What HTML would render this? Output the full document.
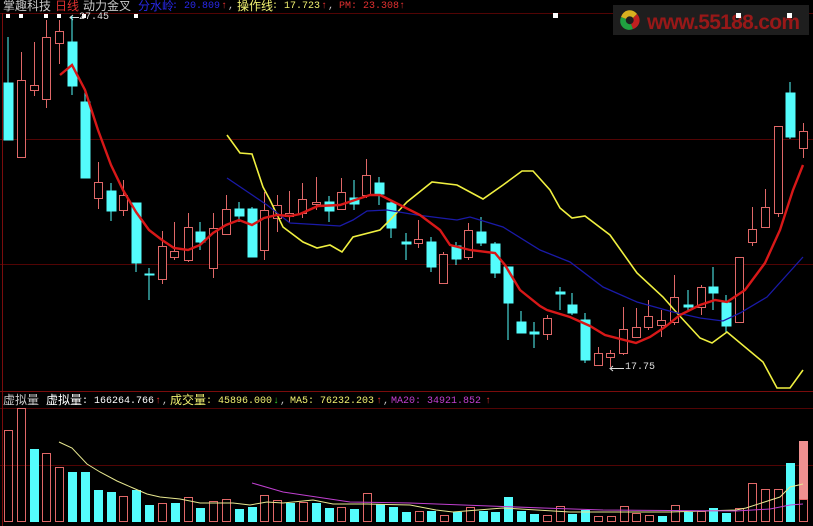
<!DOCTYPE html>
<html><head><meta charset="utf-8"><style>
html,body{margin:0;padding:0;background:#000;width:813px;height:526px;overflow:hidden;position:relative}
.t{position:absolute;white-space:pre;font-family:"Liberation Mono","Noto Sans CJK SC",monospace;font-size:10px;line-height:12px}
.c{font-family:"Liberation Sans","Noto Sans CJK SC",sans-serif;font-size:12px}
svg{position:absolute;left:0;top:0}
</style></head><body>
<svg width="813" height="526" viewBox="0 0 813 526">
<g stroke="#520404" stroke-width="1">
<line x1="0" y1="13.5" x2="813" y2="13.5"/>
<line x1="0" y1="139.5" x2="813" y2="139.5"/>
<line x1="0" y1="264.5" x2="813" y2="264.5"/>
<line x1="0" y1="391.5" x2="813" y2="391.5" stroke="#7a0c0c"/>
<line x1="0" y1="408.5" x2="813" y2="408.5"/>
<line x1="0" y1="465.5" x2="813" y2="465.5"/>
<line x1="2.5" y1="13" x2="2.5" y2="526" stroke="#7a0c0c"/>
</g>
<!-- logo -->
<rect x="613" y="5" width="196" height="30" fill="#1e1e1e"/>
<g transform="translate(630,20)">
<path d="M-9,-3 A9,9 0 0 1 7,-6 L3,-2 A4,4 0 0 0 -4,-1 Z" fill="#d8b020"/>
<path d="M7,-6 A9,9 0 0 1 3,9 L1,4 A4,4 0 0 0 3,-2 Z" fill="#c02020"/>
<path d="M3,9 A9,9 0 0 1 -9,-3 L-4,-1 A4,4 0 0 0 1,4 Z" fill="#20a040"/>
</g>
<text x="647" y="29" font-family="Liberation Sans,sans-serif" font-size="21" font-weight="bold" fill="#981818" textLength="153">www.55188.com</text>
<g fill="#fff">
<rect x="553" y="13" width="5" height="5"/><rect x="736" y="13" width="5" height="5"/><rect x="787" y="13" width="5" height="5"/>
<rect x="6" y="14" width="4" height="4"/><rect x="19" y="14" width="4" height="4"/><rect x="44" y="14" width="4" height="4"/><rect x="57" y="14" width="4" height="4"/><rect x="82" y="14" width="4" height="4"/><rect x="134" y="14" width="4" height="4"/>
</g>
<g stroke="#ddd" fill="none" stroke-width="1">
<path d="M70,17.5 H79 M73,15 L70,17.5 L73,20"/>
<path d="M610,368.5 H624 M613,366 L610,368.5 L613,371"/>
</g>
<!-- candles -->
<g stroke-width="1">
<g stroke="#54fcfc" fill="#54fcfc">
<line x1="8" y1="37" x2="8" y2="140"/><rect x="4" y="83" width="9" height="57"/>
<line x1="72" y1="16" x2="72" y2="95"/><rect x="68" y="42" width="9" height="44"/>
<line x1="85" y1="92" x2="85" y2="178"/><rect x="81" y="102" width="9" height="76"/>
<line x1="111" y1="183" x2="111" y2="221"/><rect x="107" y="191" width="9" height="20"/>
<line x1="136" y1="203" x2="136" y2="272"/><rect x="132" y="203" width="9" height="60"/>
<line x1="149" y1="268" x2="149" y2="300"/><rect x="145" y="274" width="9" height="1"/>
<line x1="200" y1="222" x2="200" y2="250"/><rect x="196" y="232" width="9" height="10"/>
<line x1="239" y1="202" x2="239" y2="222"/><rect x="235" y="209" width="9" height="7"/>
<line x1="252" y1="207" x2="252" y2="257"/><rect x="248" y="209" width="9" height="48"/>
<line x1="329" y1="196" x2="329" y2="222"/><rect x="325" y="202" width="9" height="9"/>
<line x1="354" y1="180" x2="354" y2="210"/><rect x="350" y="198" width="9" height="6"/>
<line x1="379" y1="177" x2="379" y2="205"/><rect x="375" y="183" width="9" height="11"/>
<line x1="391" y1="200" x2="391" y2="238"/><rect x="387" y="203" width="9" height="25"/>
<line x1="406" y1="233" x2="406" y2="260"/><rect x="402" y="242" width="9" height="2"/>
<line x1="431" y1="237" x2="431" y2="272"/><rect x="427" y="242" width="9" height="25"/>
<line x1="456" y1="242" x2="456" y2="265"/><rect x="452" y="246" width="9" height="13"/>
<line x1="481" y1="217" x2="481" y2="246"/><rect x="477" y="232" width="9" height="11"/>
<line x1="495" y1="242" x2="495" y2="278"/><rect x="491" y="244" width="9" height="29"/>
<line x1="508" y1="267" x2="508" y2="340"/><rect x="504" y="267" width="9" height="36"/>
<line x1="521" y1="311" x2="521" y2="333"/><rect x="517" y="322" width="9" height="11"/>
<line x1="534" y1="322" x2="534" y2="348"/><rect x="530" y="332" width="9" height="2"/>
<line x1="560" y1="287" x2="560" y2="310"/><rect x="556" y="292" width="9" height="2"/>
<line x1="572" y1="293" x2="572" y2="315"/><rect x="568" y="305" width="9" height="8"/>
<line x1="585" y1="313" x2="585" y2="363"/><rect x="581" y="320" width="9" height="40"/>
<line x1="688" y1="290" x2="688" y2="310"/><rect x="684" y="305" width="9" height="2"/>
<line x1="713" y1="267" x2="713" y2="310"/><rect x="709" y="287" width="9" height="6"/>
<line x1="726" y1="295" x2="726" y2="332"/><rect x="722" y="303" width="9" height="23"/>
<line x1="790" y1="82" x2="790" y2="139"/><rect x="786" y="93" width="9" height="44"/>
</g>
<g stroke="#e06868" fill="#000">
<line x1="21.5" y1="52" x2="21.5" y2="80"/><rect x="17.5" y="80.5" width="8" height="77"/>
<line x1="34.5" y1="42" x2="34.5" y2="96"/><rect x="30.5" y="85.5" width="8" height="5"/>
<line x1="46.5" y1="20" x2="46.5" y2="108"/><rect x="42.5" y="37.5" width="8" height="62"/>
<line x1="59.5" y1="20" x2="59.5" y2="64"/><rect x="55.5" y="31.5" width="8" height="12"/>
<line x1="98.5" y1="162" x2="98.5" y2="209"/><rect x="94.5" y="182.5" width="8" height="16"/>
<line x1="123.5" y1="180" x2="123.5" y2="216"/><rect x="119.5" y="195.5" width="8" height="15"/>
<line x1="162.5" y1="231" x2="162.5" y2="284"/><rect x="158.5" y="246.5" width="8" height="33"/>
<line x1="174.5" y1="222" x2="174.5" y2="260"/><rect x="170.5" y="251.5" width="8" height="6"/>
<line x1="188.5" y1="213" x2="188.5" y2="262"/><rect x="184.5" y="227.5" width="8" height="33"/>
<line x1="213.5" y1="213" x2="213.5" y2="278"/><rect x="209.5" y="228.5" width="8" height="40"/>
<line x1="226.5" y1="195" x2="226.5" y2="235"/><rect x="222.5" y="209.5" width="8" height="25"/>
<line x1="264.5" y1="192" x2="264.5" y2="260"/><rect x="260.5" y="210.5" width="8" height="40"/>
<line x1="277.5" y1="195" x2="277.5" y2="232"/><rect x="273.5" y="205.5" width="8" height="13"/>
<line x1="289.5" y1="191" x2="289.5" y2="223"/><rect x="285.5" y="213.5" width="8" height="3"/>
<line x1="302.5" y1="183" x2="302.5" y2="218"/><rect x="298.5" y="199.5" width="8" height="14"/>
<line x1="316.5" y1="177" x2="316.5" y2="210"/><rect x="312.5" y="202.5" width="8" height="2"/>
<line x1="341.5" y1="178" x2="341.5" y2="210"/><rect x="337.5" y="192.5" width="8" height="17"/>
<line x1="366.5" y1="159" x2="366.5" y2="198"/><rect x="362.5" y="175.5" width="8" height="20"/>
<line x1="418.5" y1="220" x2="418.5" y2="248"/><rect x="414.5" y="239.5" width="8" height="4"/>
<line x1="443.5" y1="252" x2="443.5" y2="284"/><rect x="439.5" y="254.5" width="8" height="29"/>
<line x1="468.5" y1="223" x2="468.5" y2="260"/><rect x="464.5" y="230.5" width="8" height="27"/>
<line x1="547.5" y1="315" x2="547.5" y2="340"/><rect x="543.5" y="318.5" width="8" height="16"/>
<line x1="598.5" y1="347" x2="598.5" y2="365"/><rect x="594.5" y="353.5" width="8" height="12"/>
<line x1="610.5" y1="350" x2="610.5" y2="367"/><rect x="606.5" y="353.5" width="8" height="4"/>
<line x1="623.5" y1="307" x2="623.5" y2="355"/><rect x="619.5" y="329.5" width="8" height="24"/>
<line x1="636.5" y1="308" x2="636.5" y2="337"/><rect x="632.5" y="327.5" width="8" height="10"/>
<line x1="648.5" y1="300" x2="648.5" y2="330"/><rect x="644.5" y="316.5" width="8" height="11"/>
<line x1="661.5" y1="310" x2="661.5" y2="337"/><rect x="657.5" y="320.5" width="8" height="5"/>
<line x1="674.5" y1="275" x2="674.5" y2="325"/><rect x="670.5" y="297.5" width="8" height="25"/>
<line x1="701.5" y1="285" x2="701.5" y2="315"/><rect x="697.5" y="287.5" width="8" height="20"/>
<rect x="735.5" y="257.5" width="8" height="65"/>
<line x1="752.5" y1="207" x2="752.5" y2="246"/><rect x="748.5" y="229.5" width="8" height="13"/>
<line x1="765.5" y1="189" x2="765.5" y2="227"/><rect x="761.5" y="207.5" width="8" height="20"/>
<line x1="778.5" y1="126" x2="778.5" y2="217"/><rect x="774.5" y="126.5" width="8" height="87"/>
<line x1="803.5" y1="123" x2="803.5" y2="158"/><rect x="799.5" y="131.5" width="8" height="17"/>
</g>
</g>
<!-- MA lines -->
<polyline fill="none" stroke="#f0f040" stroke-width="1.6" points="227,135 240,153 252,154 263,187 270,200 283,227 303,242 317,248 330,245 342,252 353,237 380,230 390,220 407,202 432,182 457,185 483,199 503,185 522,171 533,171 550,190 560,208 572,218 585,216 610,235 637,273 663,297 677,313 700,338 712,343 727,332 763,362 777,388 790,388 803,370"/>
<polyline fill="none" stroke="#1a1aa8" stroke-width="1.3" points="227,178 267,205 290,223 340,226 353,220 367,211 387,210 417,215 457,220 470,217 503,227 540,250 570,262 603,287 637,302 673,312 700,318 723,321 740,313 767,297 803,257"/>
<polyline fill="none" stroke="#d81818" stroke-width="2.4" points="60,75 72,65 85,90 98,130 111,165 123,190 136,212 149,230 162,240 174,248 188,250 200,245 213,233 226,225 239,220 252,225 264,218 277,215 290,216 300,214 318,206 340,205 355,200 370,195 380,195 390,200 400,205 420,215 440,230 450,245 470,250 495,253 505,265 520,290 540,306 547,310 570,317 590,326 605,335 636,343 650,337 665,327 680,315 700,305 715,300 727,302 745,290 765,263 780,230 793,190 803,165"/>
<!-- volume bars -->
<g fill="#54fcfc">
<rect x="30" y="449" width="9" height="73"/><rect x="68" y="472" width="9" height="50"/><rect x="81" y="472" width="9" height="50"/><rect x="94" y="490" width="9" height="32"/><rect x="107" y="492" width="9" height="30"/><rect x="132" y="490" width="9" height="32"/><rect x="145" y="505" width="9" height="17"/><rect x="171" y="503" width="9" height="19"/><rect x="196" y="508" width="9" height="14"/><rect x="235" y="509" width="9" height="13"/><rect x="248" y="507" width="9" height="15"/><rect x="286" y="503" width="9" height="19"/><rect x="312" y="503" width="9" height="19"/><rect x="325" y="508" width="9" height="14"/><rect x="350" y="509" width="9" height="13"/><rect x="376" y="504" width="9" height="18"/><rect x="389" y="507" width="9" height="15"/><rect x="402" y="512" width="9" height="10"/><rect x="427" y="511" width="9" height="11"/><rect x="453" y="512" width="9" height="10"/><rect x="479" y="511" width="9" height="11"/><rect x="491" y="512" width="9" height="10"/><rect x="504" y="497" width="9" height="25"/><rect x="517" y="511" width="9" height="11"/><rect x="530" y="514" width="9" height="8"/><rect x="568" y="514" width="9" height="8"/><rect x="581" y="510" width="9" height="12"/><rect x="658" y="516" width="9" height="6"/><rect x="684" y="512" width="9" height="10"/><rect x="709" y="508" width="9" height="14"/><rect x="722" y="513" width="9" height="9"/><rect x="786" y="463" width="9" height="59"/>
</g>
<g fill="none" stroke="#e06868">
<rect x="4.5" y="430.5" width="8" height="91"/><rect x="17.5" y="408.5" width="8" height="113"/><rect x="42.5" y="453.5" width="8" height="68"/><rect x="55.5" y="467.5" width="8" height="54"/><rect x="119.5" y="496.5" width="8" height="25"/><rect x="158.5" y="503.5" width="8" height="18"/><rect x="184.5" y="497.5" width="8" height="24"/><rect x="209.5" y="501.5" width="8" height="20"/><rect x="222.5" y="499.5" width="8" height="22"/><rect x="260.5" y="495.5" width="8" height="26"/><rect x="273.5" y="500.5" width="8" height="21"/><rect x="299.5" y="502.5" width="8" height="19"/><rect x="337.5" y="507.5" width="8" height="14"/><rect x="363.5" y="493.5" width="8" height="28"/><rect x="415.5" y="511.5" width="8" height="10"/><rect x="440.5" y="515.5" width="8" height="6"/><rect x="466.5" y="507.5" width="8" height="14"/><rect x="543.5" y="515.5" width="8" height="6"/><rect x="556.5" y="506.5" width="8" height="15"/><rect x="594.5" y="516.5" width="8" height="5"/><rect x="607.5" y="516.5" width="8" height="5"/><rect x="620.5" y="506.5" width="8" height="15"/><rect x="632.5" y="513.5" width="8" height="8"/><rect x="645.5" y="515.5" width="8" height="6"/><rect x="671.5" y="505.5" width="8" height="16"/><rect x="697.5" y="511.5" width="8" height="10"/><rect x="735.5" y="508.5" width="8" height="13"/><rect x="748.5" y="483.5" width="8" height="38"/><rect x="761.5" y="489.5" width="8" height="32"/><rect x="774.5" y="489.5" width="8" height="32"/><rect x="799.5" y="499.5" width="8" height="22"/>
</g>
<rect x="799" y="441" width="9" height="58" fill="#f09090"/>
<polyline fill="none" stroke="#e8e890" stroke-width="1" points="59,442 72,448 87,464 100,472 117,481 133,488 147,494 160,497 180,499 200,503 233,503 250,505 267,502 283,503 313,500 333,504 367,504 410,505 436,510 453,512 503,508 570,512 670,512 736,510 746,508 780,497 790,487 803,484"/>
<polyline fill="none" stroke="#c040d0" stroke-width="1" points="252,483 283,492 350,502 410,503 463,505 543,508 603,510 736,511 770,509 790,505 803,504"/>
</svg>
<div class="t" style="left:79px;top:12px;color:#ddd">27.45</div>
<div class="t" style="left:625px;top:362px;color:#ddd">17.75</div>
<!-- top header -->
<div class="t c" style="left:3px;top:0px;color:#c8c8c8">掌趣科技</div>
<div class="t c" style="left:55px;top:0px;color:#e03030">日线</div>
<div class="t c" style="left:83px;top:0px;color:#c8c8c8">动力金叉</div>
<div class="t c" style="left:138px;top:0px;color:#2828e8">分水岭</div>
<div class="t" style="left:172px;top:1px;color:#2828e8">: 20.809</div>
<div class="t" style="left:221px;top:1px;color:#e03030">↑</div>
<div class="t" style="left:228px;top:1px;color:#c8c8c8">,</div>
<div class="t c" style="left:237px;top:0px;color:#f0f070">操作线</div>
<div class="t" style="left:272px;top:1px;color:#f0f070">: 17.723</div>
<div class="t" style="left:321px;top:1px;color:#e03030">↑</div>
<div class="t" style="left:328px;top:1px;color:#c8c8c8">,</div>
<div class="t" style="left:339px;top:1px;color:#e03030">PM: 23.308↑</div>
<!-- volume header -->
<div class="t c" style="left:3px;top:394px;color:#c8c8c8">虚拟量</div>
<div class="t c" style="left:46px;top:394px;color:#fff">虚拟量</div>
<div class="t" style="left:82px;top:396px;color:#fff">: 166264.766</div>
<div class="t" style="left:155px;top:396px;color:#e03030">↑</div>
<div class="t" style="left:162px;top:396px;color:#c8c8c8">,</div>
<div class="t c" style="left:170px;top:394px;color:#f0f070">成交量</div>
<div class="t" style="left:206px;top:396px;color:#f0f070">: 45896.000</div>
<div class="t" style="left:273px;top:396px;color:#30d030">↓</div>
<div class="t" style="left:280px;top:396px;color:#c8c8c8">,</div>
<div class="t" style="left:290px;top:396px;color:#f0f070">MA5: 76232.203</div>
<div class="t" style="left:376px;top:396px;color:#e03030">↑</div>
<div class="t" style="left:383px;top:396px;color:#c8c8c8">,</div>
<div class="t" style="left:391px;top:396px;color:#c040d0">MA20: 34921.852</div>
<div class="t" style="left:485px;top:396px;color:#e03030">↑</div>
</body></html>
